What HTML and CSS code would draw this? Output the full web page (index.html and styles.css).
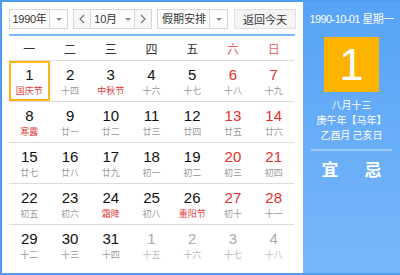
FILE: index.html
```html
<!DOCTYPE html>
<html lang="zh-CN">
<head>
<meta charset="utf-8">
<link rel="stylesheet" href="styles.css">
</head>
<body>
<div class="cal">
  <div class="main">
    <div class="bar">
      <div class="sel year"><span class="val">1990年</span><span class="drop"><i class="tri"></i></span></div>
      <div class="sel month">
        <span class="nav"><svg width="8" height="10" viewBox="0 0 8 10"><path d="M6 1 L2 5 L6 9" fill="none" stroke="#777" stroke-width="1.2"/></svg></span>
        <span class="val mval">10月<i class="tri"></i></span>
        <span class="nav"><svg width="8" height="10" viewBox="0 0 8 10"><path d="M2 1 L6 5 L2 9" fill="none" stroke="#777" stroke-width="1.2"/></svg></span>
      </div>
      <div class="sel holiday"><span class="val">假期安排</span><span class="drop"><i class="tri"></i></span></div>
      <div class="btn">返回今天</div>
    </div>
    <div class="rule"></div>
    <div class="week">
      <span>一</span><span>二</span><span>三</span><span>四</span><span>五</span><span class="we">六</span><span class="we">日</span>
    </div>
    <div class="grid">
      <div class="cell today"><b>1</b><em class="fest">国庆节</em></div>
      <div class="cell"><b>2</b><em>十四</em></div>
      <div class="cell"><b>3</b><em class="fest">中秋节</em></div>
      <div class="cell"><b>4</b><em>十六</em></div>
      <div class="cell"><b>5</b><em>十七</em></div>
      <div class="cell red"><b>6</b><em>十八</em></div>
      <div class="cell red"><b>7</b><em>十九</em></div>

      <div class="cell"><b>8</b><em class="fest">寒露</em></div>
      <div class="cell"><b>9</b><em>廿一</em></div>
      <div class="cell"><b>10</b><em>廿二</em></div>
      <div class="cell"><b>11</b><em>廿三</em></div>
      <div class="cell"><b>12</b><em>廿四</em></div>
      <div class="cell red"><b>13</b><em>廿五</em></div>
      <div class="cell red"><b>14</b><em>廿六</em></div>

      <div class="cell"><b>15</b><em>廿七</em></div>
      <div class="cell"><b>16</b><em>廿八</em></div>
      <div class="cell"><b>17</b><em>廿九</em></div>
      <div class="cell"><b>18</b><em>初一</em></div>
      <div class="cell"><b>19</b><em>初二</em></div>
      <div class="cell red"><b>20</b><em>初三</em></div>
      <div class="cell red"><b>21</b><em>初四</em></div>

      <div class="cell"><b>22</b><em>初五</em></div>
      <div class="cell"><b>23</b><em>初六</em></div>
      <div class="cell"><b>24</b><em class="fest">霜降</em></div>
      <div class="cell"><b>25</b><em>初八</em></div>
      <div class="cell"><b>26</b><em class="fest">重阳节</em></div>
      <div class="cell red"><b>27</b><em>初十</em></div>
      <div class="cell red"><b>28</b><em>十一</em></div>

      <div class="cell"><b>29</b><em>十二</em></div>
      <div class="cell"><b>30</b><em>十三</em></div>
      <div class="cell"><b>31</b><em>十四</em></div>
      <div class="cell other"><b>1</b><em>十五</em></div>
      <div class="cell other"><b>2</b><em>十六</em></div>
      <div class="cell other"><b>3</b><em>十七</em></div>
      <div class="cell other"><b>4</b><em>十八</em></div>
    </div>
  </div>
  <div class="side">
    <div class="date">1990-10-01 星期一</div>
    <div class="big">1</div>
    <div class="lunar first">八月十三</div>
    <div class="lunar">庚午年【马年】</div>
    <div class="lunar">乙酉月 己亥日</div>
    <div class="sep"></div>
    <div class="yj"><span>宜</span><span>忌</span></div>
  </div>
</div>
</body>
</html>
```

FILE: styles.css
```css
* { box-sizing: border-box; }
html, body { margin: 0; padding: 0; background: #fff; }
body { font-family: "Liberation Sans", "Noto Sans CJK SC", sans-serif; }

.cal {
  width: 400px;
  height: 275px;
  display: flex;
  border-left: 2px solid #4f9cf5;
  border-top: 2px solid #4f9cf5;
  border-bottom: 2px solid #4f9cf5;
}

.main {
  width: 301px;
  padding: 7px 0 0 7px;
}

.bar {
  display: flex;
  height: 20px;
}

.sel, .btn {
  height: 20px;
  border: 1px solid #d6d6d6;
  background: #fff;
  display: flex;
  align-items: center;
  font-size: 11px;
  color: #333;
  white-space: nowrap;
  font-family: "Liberation Sans", "Noto Sans CJK SC", sans-serif;
}

.sel .val { flex: 1; text-align: center; line-height: 18px; }
.drop {
  width: 18px;
  height: 100%;
  border-left: 1px solid #d6d6d6;
  display: flex;
  align-items: center;
  justify-content: center;
}
.tri {
  display: inline-block;
  width: 0;
  height: 0;
  border-left: 3px solid transparent;
  border-right: 3px solid transparent;
  border-top: 3px solid #888;
}

.year { width: 59px; }
.year .val { letter-spacing: -0.3px; }

.month { width: 79px; margin-left: 5px; }
.nav {
  width: 17px;
  height: 100%;
  display: flex;
  align-items: center;
  justify-content: center;
  background: #f7f7f7;
}
.nav:first-child { border-right: 1px solid #d6d6d6; }
.nav:last-child { border-left: 1px solid #d6d6d6; }
.mval { display: flex; align-items: center; justify-content: center; gap: 8px; letter-spacing: -0.3px; }

.holiday { width: 71px; margin-left: 5px; }
.holiday .val { padding-left: 1px; }

.btn {
  width: 62px;
  margin-left: 6px;
  background: #f4f4f4;
  justify-content: center;
  border-color: #e0e0e0;
}

.rule {
  width: 286px;
  height: 2px;
  margin-top: 5px;
  background: #7bb9f6;
}

.week {
  display: grid;
  grid-template-columns: repeat(7, 1fr);
  width: 285px;
  height: 24px;
  align-items: center;
  font-family: "Noto Sans CJK SC", sans-serif;
  font-size: 12px;
  color: #333;
  text-align: center;
}
.week .we { color: #e76b6b; }

.grid {
  display: grid;
  grid-template-columns: repeat(7, 1fr);
  width: 285px;
}

.cell {
  height: 41px;
  border-top: 1px solid #dcdcdc;
  display: flex;
  flex-direction: column;
  align-items: center;
  padding-top: 5px;
}
.cell b {
  font-weight: normal;
  font-size: 15px;
  line-height: 18px;
  color: #111;
}
.cell em {
  font-style: normal;
  font-family: "Noto Sans CJK SC", sans-serif;
  font-size: 9px;
  line-height: 12px;
  margin-top: 1px;
  color: #9a9a9a;
}
.cell em.fest { color: #e33b3b; }
.cell.red b { color: #e52e2e; }
.cell.other b { color: #aaa; }
.cell.other em { color: #bbb; }

.cell.today {
  box-shadow: inset 0 0 0 2px #fdb31c;
}

.side {
  flex: 1;
  background: linear-gradient(#57a3f6, #78b7fa);
  display: flex;
  flex-direction: column;
  align-items: center;
  color: #fff;
  font-family: "Liberation Sans", "Noto Sans CJK SC", sans-serif;
}
.date {
  font-size: 11px;
  letter-spacing: -0.6px;
  white-space: nowrap;
  margin-top: 10px;
  line-height: 14px;
}
.big {
  width: 55px;
  height: 55px;
  margin-top: 11px;
  background: #fdb400;
  font-size: 44px;
  line-height: 55px;
  text-align: center;
  font-weight: 300;
}
.lunar {
  font-family: "Noto Sans CJK SC", sans-serif;
  font-size: 10px;
  line-height: 15px;
  white-space: nowrap;
}
.lunar.first { margin-top: 5px; }
.sep {
  width: 81px;
  height: 2px;
  background: #9fcbfa;
  margin-top: 7px;
}
.yj {
  display: flex;
  gap: 26px;
  margin-top: 8px;
  font-family: "Noto Sans CJK SC", sans-serif;
  font-size: 17px;
  line-height: 20px;
  font-weight: bold;
}
```
